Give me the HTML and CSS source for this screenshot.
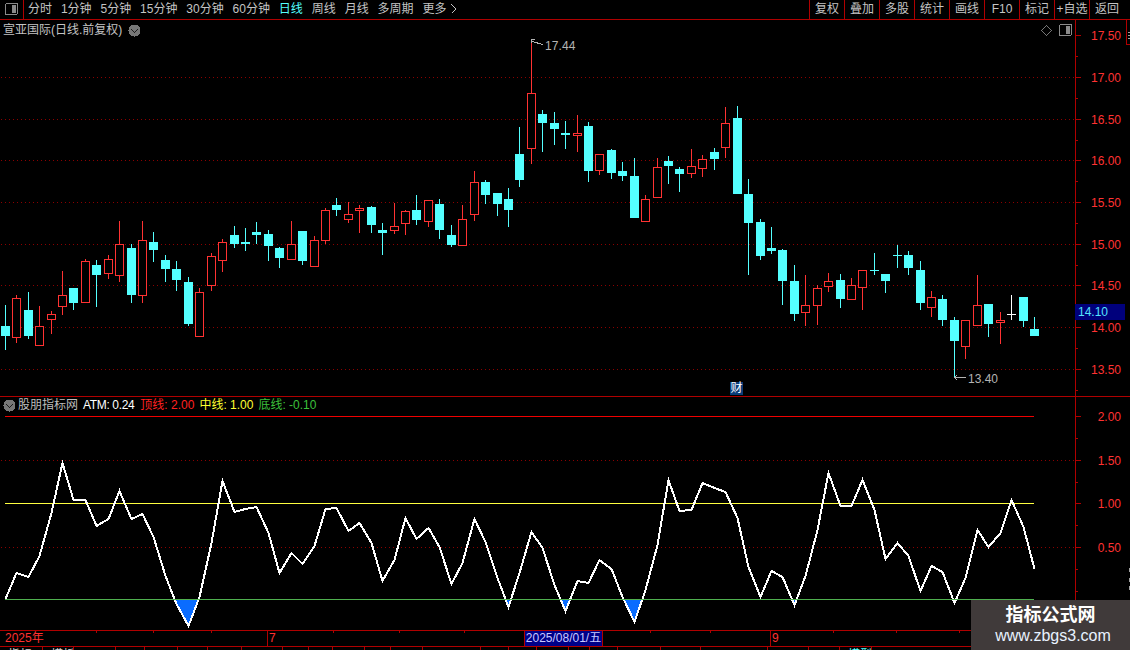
FILE: index.html
```html
<!DOCTYPE html>
<html lang="zh-CN">
<head>
<meta charset="utf-8">
<title>宣亚国际</title>
<link rel="stylesheet" href="styles.css">
</head>
<body>
<div class="app">
  <header class="toolbar">
    <div class="tool-icon">
      <svg class="toggle" width="13" height="12" viewBox="0 0 13 12"><rect x="0.5" y="0.5" width="12" height="11" rx="1.5" class="toggle-box"/><rect x="7" y="2" width="4" height="8" class="toggle-fill"/></svg>
    </div>
    <nav class="periods">
      <span>分时</span><span>1分钟</span><span>5分钟</span><span>15分钟</span><span>30分钟</span><span>60分钟</span>
      <span class="active">日线</span><span>周线</span><span>月线</span><span>多周期</span>
      <span class="more">更多<svg width="6" height="10" viewBox="0 0 6 10"><path d="M.5 .5l4.5 4.5-4.5 4.5"/></svg></span>
    </nav>
    <div class="actions">
      <span>复权</span><span>叠加</span><span>多股</span><span>统计</span><span>画线</span><span>F10</span><span>标记</span><span>+自选</span><span>返回</span>
    </div>
  </header>

  <section class="panel panel-main">
    <div class="plot">
      <svg id="mainPlot" width="1075" height="376" viewBox="0 20 1075 376"></svg>
      <div class="plot-title">
        <span>宣亚国际(日线.前复权)</span>
        <svg class="chev" width="13" height="13" viewBox="0 0 13 13"><circle cx="6.5" cy="6.5" r="6"/><path d="M3.5 5.5l3 3 3-3"/></svg>
      </div>
      <div class="plot-tools">
        <svg width="11" height="11" viewBox="0 0 11 11"><path class="diamond" d="M5.5 .5l5 5-5 5-5-5z"/></svg>
        <svg class="toggle" width="13" height="12" viewBox="0 0 13 12"><rect x="0.5" y="0.5" width="12" height="11" rx="1.5" class="toggle-box"/><rect x="7" y="2" width="4" height="8" class="toggle-fill"/></svg>
      </div>
      <span class="note note-high">17.44</span>
      <span class="note note-low">13.40</span>
      <span class="cai">财</span>
    </div>
    <div class="axis">
      <svg id="mainAxis" width="55" height="376" viewBox="1075 20 55 376"></svg>
      <span class="last-price">14.10</span>
      <div class="corner"></div>
    </div>
  </section>

  <section class="panel panel-ind">
    <div class="plot">
      <svg id="indPlot" width="1075" height="233" viewBox="0 397 1075 233"></svg>
      <div class="ind-title">
        <svg class="chev" width="13" height="13" viewBox="0 0 13 13"><circle cx="6.5" cy="6.5" r="6"/><path d="M3.5 5.5l3 3 3-3"/></svg>
        <span class="ind-name">股朋指标网</span>
        <span class="c-white">ATM: 0.24</span>
        <span class="c-red">顶线: 2.00</span>
        <span class="c-yellow">中线: 1.00</span>
        <span class="c-green">底线: -0.10</span>
      </div>
    </div>
    <div class="axis">
      <svg id="indAxis" width="55" height="233" viewBox="1075 397 55 233"></svg>
    </div>
  </section>

  <section class="date-axis">
    <svg id="dateAxis" width="1130" height="15" viewBox="0 631 1130 15"></svg>
    <span class="date-label date-year">2025年</span>
    <span class="date-label date-jul">7</span>
    <span class="date-now">2025/08/01/五</span>
    <span class="date-label date-sep">9</span>
  </section>

  <footer class="tabs" id="tabs"></footer>
</div>

<aside class="watermark">
  <strong>指标公式网</strong>
  <span>www.zbgs3.com</span>
</aside>
<script src="chart.js"></script>
</body>
</html>
```

FILE: styles.css
```css
* { box-sizing: border-box; }
html, body { margin: 0; height: 100%; background: #000; overflow: hidden; }
body {
  position: relative;
  width: 1130px;
  height: 650px;
  font: 12px/14px "Liberation Sans", "Noto Sans CJK SC", sans-serif;
  color: #c4c4c4;
}
.app { display: flex; flex-direction: column; height: 650px; }

.toolbar { display: flex; height: 20px; border-bottom: 1px solid #b00000; flex: none; }
.tool-icon { width: 24px; border-right: 1px solid #b00000; padding: 3px 0 0 5px; flex: none; }
.toggle { display: block; }
.toggle-box { fill: none; stroke: #8a8a8a; }
.toggle-fill { fill: #8a8a8a; }
.periods { display: flex; align-items: flex-start; gap: 8.9px; padding: 2px 0 0 4px; flex: 1; }
.periods .active { color: #54ffff; }
.more { display: flex; align-items: center; gap: 5px; }
.more svg { display: block; }
.more path { fill: none; stroke: #c4c4c4; }
.actions { display: flex; flex: none; }
.actions span { width: 35px; border-left: 1px solid #b00000; text-align: center; padding-top: 2px; }
.actions span:last-child { width: 41px; padding-right: 6px; }

.panel { display: flex; flex: none; border-bottom: 1px solid #b00000; }
.panel-main { height: 377px; }
.panel-ind { height: 234px; }
.plot { position: relative; width: 1075px; flex: none; }
.plot svg, .axis svg { display: block; }
.axis { position: relative; width: 55px; border-left: 0; }

.plot-title { position: absolute; left: 3px; top: 3px; display: flex; align-items: center; gap: 6px; }
.chev circle { fill: #777; }
.chev path { fill: none; stroke: #1c1c1c; stroke-width: 1.3; }
.plot-tools { position: absolute; right: 3px; top: 4px; display: flex; align-items: center; gap: 7px; }
.plot-tools svg { display: block; }
.diamond { fill: none; stroke: #777; }
.note { position: absolute; color: #b4b4b4; }
.note-high { left: 545px; top: 19px; letter-spacing: .1px; }
.note-low { left: 968px; top: 352px; }
.cai { position: absolute; left: 730px; top: 362px; width: 13px; height: 13px; line-height: 13px; text-align: center; background: #0a3c78; color: #fff; }

.last-price { position: absolute; left: 0; top: 284px; width: 50px; height: 16px; line-height: 16px; padding-left: 3px; background: #00007c; color: #54e4ff; }
.corner { position: absolute; right: 0; top: 0; width: 4px; height: 25px; border-left: 1px solid #b00000; border-bottom: 1px solid #b00000; }

.ind-title { position: absolute; left: 3px; top: 1px; display: flex; align-items: center; gap: 5px; height: 14px; }
.ind-title .chev { margin-right: -3px; }
.ind-name { color: #bdbdbd; }
.c-white { color: #fff; letter-spacing: -.35px; margin-right: 1px; }
.c-red { color: #ff2020; }
.c-yellow { color: #ffff30; }
.c-green { color: #3cc03c; }

.date-axis { position: relative; height: 16px; border-bottom: 1px solid #b00000; flex: none; }
.date-axis svg { display: block; }
.date-label { position: absolute; top: 0; color: #ff3030; line-height: 15px; }
.date-year { left: 5px; }
.date-jul { left: 269px; }
.date-sep { left: 772px; }
.date-now { position: absolute; left: 524px; top: 0; width: 79px; height: 15px; line-height: 15px; text-align: center; background: #000088; color: #c8c8ff; border: 1px solid #b00000; border-width: 0 1px; }

.tabs { display: flex; height: 4px; overflow: hidden; flex: none; }
.tab { border-right: 1px solid #b00000; flex: none; line-height: 14px; padding: 1px 0 0 8px; overflow: hidden; white-space: nowrap; color: #d8d8d8; }
.tab.on { color: #54ffff; }

.watermark { position: absolute; left: 971px; top: 600px; width: 159px; height: 50px; background: #403a3a; color: #fff; display: flex; flex-direction: column; align-items: center; }
.watermark strong { font-size: 18px; line-height: 20px; margin-top: 5px; }
.watermark span { font-size: 16px; line-height: 19px; margin: 1px 0 0 5px; color: #e8f2ff; }

/* chart parts */
svg { shape-rendering: crispEdges; }
.dot { fill: #8c0000; }
.wick-c { stroke: #54ffff; fill: none; }
.wick-r { stroke: #ff3232; fill: none; }
.wick-w { stroke: #fff; fill: none; }
.body-c { fill: #54ffff; }
.body-r { fill: #000; stroke: #ff3232; }
.mark { fill: none; stroke: #b4b4b4; }
.edge { fill: none; stroke: #a0a0a0; }
.axis-line { stroke: #b00000; fill: none; }
.axis-text { fill: #ff3232; font: 12px "Liberation Sans", sans-serif; text-anchor: end; shape-rendering: auto; }
.atm { fill: none; stroke: #fff; stroke-width: 2; }
.atm-fill { fill: #0a6cff; stroke: none; }
.lvl-top { stroke: #f00000; }
.lvl-mid { stroke: #ffff40; }
.lvl-low { stroke: #4fb04f; }
```

FILE: chart.js
```js
(function () {
  var NS = 'http://www.w3.org/2000/svg';
  function add(svg, tag, attrs) {
    var el = document.createElementNS(NS, tag);
    for (var k in attrs) el.setAttribute(k, attrs[k]);
    svg.appendChild(el);
    return el;
  }
  function xAt(i) { return Math.floor(5.3 + 11.435 * i); }

  // one dotted grid row: a 1px dot every 4px, on whole pixels
  function dots(svg, y) {
    var d = '';
    for (var x = 1; x < 1075; x += 4) d += 'M' + x + ' ' + y + 'h1v1h-1z';
    add(svg, 'path', { 'class': 'dot', d: d });
  }

  // high, body top, body bottom, low, kind (pixel rows on the page)
  var candles = [
    [305,326,336,350,'c'],[295,298,338,343,'r'],[292,310,336,339,'c'],[306,326,346,346,'r'],
    [311,314,320,334,'r'],[271,295,307,315,'r'],[288,288,303,310,'c'],[259,261,303,303,'r'],
    [260,265,275,307,'c'],[255,259,274,279,'r'],[221,244,276,282,'r'],[244,248,295,303,'c'],
    [221,240,296,303,'r'],[232,242,250,262,'c'],[255,260,269,282,'c'],[261,269,280,291,'c'],
    [277,282,324,326,'c'],[288,292,337,337,'r'],[253,256,286,291,'r'],[239,242,261,272,'r'],
    [226,235,244,248,'c'],[228,242,244,251,'c'],[222,232,235,244,'c'],[230,234,246,261,'c'],
    [247,248,258,268,'c'],[221,244,260,260,'r'],[231,231,261,265,'c'],[236,240,267,267,'r'],
    [208,210,241,244,'r'],[198,205,210,216,'c'],[202,214,220,223,'r'],[205,208,211,233,'r'],
    [206,207,225,233,'c'],[223,230,233,255,'c'],[203,226,231,234,'r'],[210,211,224,235,'r'],
    [195,210,220,225,'c'],[200,200,222,227,'r'],[199,204,230,239,'c'],[225,235,245,247,'c'],
    [205,219,246,246,'r'],[171,182,215,221,'r'],[180,182,195,204,'c'],[193,193,204,216,'c'],
    [188,199,210,227,'c'],[127,154,180,187,'c'],[40,93,149,164,'r'],[110,114,123,152,'c'],
    [112,123,129,145,'c'],[121,133,135,149,'c'],[115,133,136,152,'r'],[122,126,171,182,'c'],
    [154,154,171,175,'r'],[149,150,173,179,'c'],[162,171,176,181,'c'],[158,176,218,218,'c'],
    [195,199,222,222,'r'],[158,167,198,198,'r'],[156,161,166,184,'c'],[167,169,174,192,'c'],
    [149,166,174,178,'r'],[155,159,169,177,'r'],[148,152,159,170,'c'],[107,123,148,158,'r'],
    [106,118,194,194,'c'],[179,194,223,275,'c'],[219,222,256,260,'c'],[227,248,251,254,'c'],
    [249,250,281,305,'c'],[265,281,314,321,'c'],[275,305,313,326,'r'],[285,288,306,325,'r'],
    [273,281,287,292,'r'],[274,280,299,308,'c'],[278,285,300,300,'r'],[270,270,288,310,'r'],
    [253,270,271,275,'c'],[274,274,281,293,'c'],[245,255,256,268,'c'],[251,255,268,275,'c'],
    [261,270,303,310,'c'],[291,297,308,317,'r'],[295,299,320,326,'c'],[317,320,341,378,'c'],
    [320,320,347,359,'r'],[275,305,326,326,'r'],[304,304,324,337,'c'],[312,320,323,344,'r'],
    [295,314,315,320,'w'],[297,297,321,327,'c'],[317,329,336,336,'c']
  ];

  var atm = [599,573,577,556,513,463,500,500,526,519,491,519,514,537,576,604,626,597,543,481,
    512,509,507,533,573,553,564,546,509,508,531,523,543,581,560,518,539,528,547,584,563,519,
    542,578,607,573,532,548,585,611,581,583,560,569,597,622,590,545,480,511,510,483,488,492,
    518,567,597,571,577,605,576,530,473,506,506,480,510,559,543,556,591,566,572,603,578,530,
    547,533,500,527,569];

  // main price panel
  var main = document.getElementById('mainPlot');
  [77, 119, 160, 202, 244, 285, 327, 369].forEach(function (y) { dots(main, y); });
  var wick = { c: '', r: '', w: '' };
  candles.forEach(function (c, i) {
    var x = xAt(i) + 0.5;
    wick[c[4]] += 'M' + x + ' ' + c[0] + 'V' + c[3];
  });
  ['c', 'r', 'w'].forEach(function (k) {
    add(main, 'path', { 'class': 'wick-' + k, d: wick[k] });
  });
  candles.forEach(function (c, i) {
    var x = xAt(i);
    if (c[4] === 'c') {
      add(main, 'rect', { 'class': 'body-c', x: x - 4, y: c[1], width: 9, height: c[2] - c[1] });
    } else if (c[4] === 'r') {
      add(main, 'rect', { 'class': 'body-r', x: x - 3.5, y: c[1] + 0.5, width: 8, height: c[2] - c[1] - 1 });
    } else {
      add(main, 'path', { 'class': 'wick-w', d: 'M' + (x - 4) + ' ' + (c[1] + 0.5) + 'h9' });
    }
  });
  add(main, 'path', { 'class': 'mark', d: 'M531.5 43V39.5H535M532 41.5L543 44.5' });
  add(main, 'path', { 'class': 'mark', d: 'M954 377.5H966M957 375L954.5 377.5L957 380' });

  // price axis
  function axis(svg, ticks, minor) {
    add(svg, 'path', { 'class': 'axis-line', d: 'M1075.5 0V650' });
    ticks.forEach(function (t) {
      add(svg, 'path', { 'class': 'axis-line', d: 'M1075 ' + (t[0] + 0.5) + 'h6' });
      add(svg, 'text', { 'class': 'axis-text', x: 1121, y: t[0] + 5 }).textContent = t[1];
    });
    minor.forEach(function (y) {
      add(svg, 'path', { 'class': 'axis-line', d: 'M1075 ' + (y + 0.5) + 'h3' });
    });
  }
  var mainAxis = document.getElementById('mainAxis');
  axis(mainAxis,
    [[35,'17.50'],[77,'17.00'],[119,'16.50'],[160,'16.00'],[202,'15.50'],[244,'15.00'],[285,'14.50'],[327,'14.00'],[369,'13.50']],
    [56,98,140,181,223,265,306,348,390]);
  add(mainAxis, 'path', { 'class': 'edge', d: 'M1128 32.5h2M1128 35.5h2M1128 38.5h2' });

  // indicator panel
  var ind = document.getElementById('indPlot');
  [460, 547].forEach(function (y) { dots(ind, y); });
  var defs = add(ind, 'defs', {});
  var clip = add(defs, 'clipPath', { id: 'belowFloor' });
  add(clip, 'rect', { x: 0, y: 600, width: 1075, height: 40 });
  var pts = atm.map(function (y, i) { return (xAt(i) + 0.5) + ',' + y; }).join(' ');
  add(ind, 'polygon', { 'class': 'atm-fill', points: pts, 'clip-path': 'url(#belowFloor)' });
  add(ind, 'path', { 'class': 'lvl-top', d: 'M5 416.5H1034' });
  add(ind, 'path', { 'class': 'lvl-mid', d: 'M5 503.5H1034' });
  add(ind, 'polyline', { 'class': 'atm', points: pts });
  add(ind, 'path', { 'class': 'lvl-low', d: 'M5 599.5H1034' });
  var indAxis = document.getElementById('indAxis');
  axis(indAxis,
    [[416,'2.00'],[460,'1.50'],[503,'1.00'],[547,'0.50']],
    [438,482,525,569,591,612]);
  add(indAxis, 'path', { 'class': 'edge', d: 'M1129.5 568v4M1129.5 578v4M1129.5 586v4' });

  // date axis
  var date = document.getElementById('dateAxis');
  add(date, 'path', { 'class': 'axis-line', d: 'M1075.5 631V646' });
  [96, 153, 211, 333, 399, 464, 650, 710, 833, 896, 959].forEach(function (x) {
    add(date, 'path', { 'class': 'axis-line', d: 'M' + (x + 0.5) + ' 631v2' });
  });
  [267, 770].forEach(function (x) {
    add(date, 'path', { 'class': 'axis-line', d: 'M' + (x + 0.5) + ' 631V646' });
  });

  // bottom tab strip
  var tabs = document.getElementById('tabs');
  var stops = [
    [42,'指标'],[73,'模板'],[115,''],[144,''],[177,''],[207,''],[241,''],[282,''],[308,''],
    [332,''],[364,''],[390,''],[422,''],[480,''],[508,''],[536,''],[568,''],[589,''],[617,''],
    [660,''],[700,''],[767,''],[808,''],[839,''],[871,'模型','on'],[971,'']
  ];
  var last = 0;
  stops.forEach(function (s) {
    var t = document.createElement('span');
    t.className = 'tab' + (s[2] ? ' ' + s[2] : '');
    t.style.width = (s[0] - last + 1) + 'px';
    t.textContent = s[1];
    tabs.appendChild(t);
    last = s[0] + 1;
  });
})();
```
